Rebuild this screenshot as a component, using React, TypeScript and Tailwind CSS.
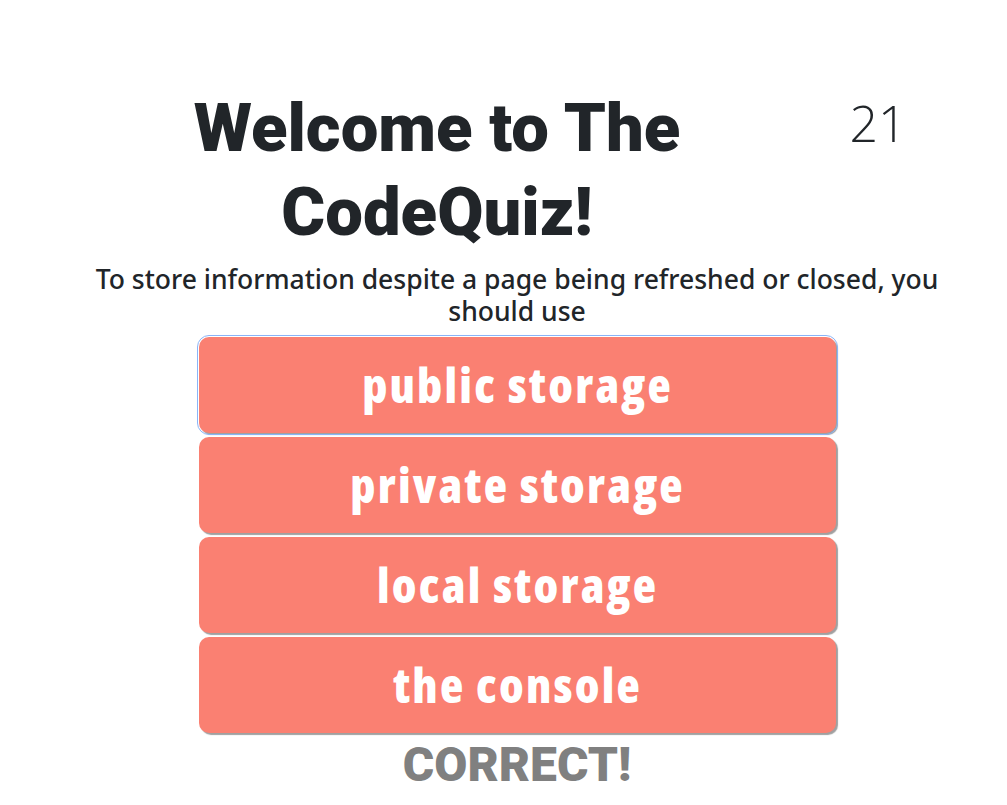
import React from "react";

export default function App() {
  const answers = ["public storage", "private storage", "local storage", "the console"];
  return (
    <div className="w-[1007px] h-[805px] bg-white overflow-hidden">
      <div className="flex pt-[86px]">
        <div className="ml-[99px] w-[676px] text-center">
          <h1 className="text-[67px] leading-[84px] font-black text-[#212529] font-['Roboto',sans-serif]">
            Welcome to The
            <br />
            CodeQuiz!
          </h1>
        </div>
        <div className="w-[206px] text-center text-[50px] leading-[60px] font-light text-[#212529] pt-[7px] font-['Open_Sans','Noto_Sans',sans-serif]">
          21
        </div>
      </div>
      <div className="ml-[87px] w-[860px] mt-[9px] text-center text-[26.5px] leading-[32px] font-medium text-[#212529] font-['Noto_Sans','Open_Sans',sans-serif]">
        To store information despite a page being refreshed or closed, you should use
      </div>
      <div className="ml-[199px] w-[637px] flex flex-col gap-[4px] mt-[10px]">
        {answers.map((a, i) => (
          <button
            key={a}
            className={
              i === 0
                ? "h-[96px] w-full rounded-[10px] bg-[#fa8072] text-white text-[48px] tracking-[2.2px] font-extrabold shadow-[2px_2px_1px_0_#a0a0a0] font-['Open_Sans',sans-serif] font-stretch-condensed outline outline-1 outline-[#8ab4f8] outline-offset-[1px]"
                : "h-[96px] w-full rounded-[10px] bg-[#fa8072] text-white text-[48px] tracking-[2.2px] font-extrabold shadow-[2px_2px_1px_0_#a0a0a0] font-['Open_Sans',sans-serif] font-stretch-condensed"
            }
          >
            {a}
          </button>
        ))}
      </div>
      <div className="text-center ml-[87px] w-[860px] text-[48px] leading-[56px] font-black text-[#808080] mt-[4px] font-['Roboto',sans-serif]">
        CORRECT!
      </div>
    </div>
  );
}
